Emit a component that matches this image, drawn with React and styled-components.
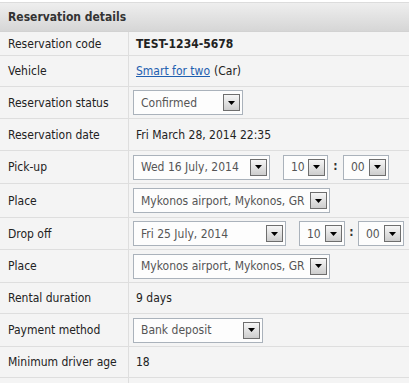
import React from 'react';
import styled, { createGlobalStyle } from 'styled-components';

const GlobalStyle = createGlobalStyle`
  html, body {
    margin: 0;
    padding: 0;
    background: #fff;
    overflow: hidden;
  }
  body {
    font-family: "DejaVu Sans Condensed", "DejaVu Sans", "Liberation Sans", sans-serif;
    font-size: 12px;
    color: #222;
  }
`;

const Panel = styled.div`
  width: 409px;
  padding-top: 2px;
`;

const Header = styled.div`
  height: 28px;
  border-top: 1px solid #dcdcdc;
  border-bottom: 1px solid #d2d2d2;
  background: linear-gradient(#eeeeee, #d6d6d6);
  display: flex;
  align-items: center;
  padding-left: 8px;
  font-weight: bold;
  font-size: 12px;
  color: #333;
`;

const Row = styled.div`
  display: grid;
  grid-template-columns: 129px 1fr;
  height: ${p => p.h}px;
  border-bottom: 1px solid #dedede;
  background: #f4f4f4;
  box-sizing: border-box;
`;

const Label = styled.div`
  display: flex;
  align-items: center;
  padding-left: 8px;
  border-right: 1px solid #dedede;
  color: #222;
`;

const Value = styled.div`
  display: flex;
  align-items: center;
  padding-left: ${p => (p.$control ? 4 : 7)}px;
  color: #222;
  font-weight: ${p => (p.$bold ? 'bold' : 'normal')};
`;

const Link = styled.a`
  color: #1f5fb0;
  text-decoration: underline;
  margin-right: 4px;
`;

const SelectBox = styled.div`
  width: ${p => p.w}px;
  height: 25px;
  box-sizing: border-box;
  border: 1px solid #aab2bb;
  background: #fdfdfd;
  display: flex;
  align-items: center;
  justify-content: space-between;
  padding: 0 2px 0 7px;
  margin-left: ${p => p.ml || 0}px;
  color: #555;
  white-space: nowrap;
  overflow: hidden;
`;

const ArrowButton = styled.span`
  flex: none;
  width: 15px;
  height: 15px;
  border: 1px solid #6e6e6e;
  background: linear-gradient(#f6f6f6, #cdcdcd);
  display: flex;
  align-items: center;
  justify-content: center;
  margin-left: 3px;
`;

const Colon = styled.span`
  font-weight: bold;
  color: #333;
  width: ${p => p.w}px;
  text-align: center;
  margin-top: -3px;
`;

const Arrow = () => (
  <ArrowButton>
    <svg width="7" height="4" viewBox="0 0 7 4">
      <path d="M0 0H7L3.5 4Z" fill="#000" />
    </svg>
  </ArrowButton>
);

const Select = ({ w, ml, children }) => (
  <SelectBox w={w} ml={ml}>
    <span>{children}</span>
    <Arrow />
  </SelectBox>
);

export default function App() {
  return (
    <>
      <GlobalStyle />
      <Panel>
        <Header>Reservation details</Header>
        <Row h={24}>
          <Label>Reservation code</Label>
          <Value $bold>TEST-1234-5678</Value>
        </Row>
        <Row h={31}>
          <Label>Vehicle</Label>
          <Value><Link href="#">Smart for two</Link>(Car)</Value>
        </Row>
        <Row h={32}>
          <Label>Reservation status</Label>
          <Value $control><Select w={110}>Confirmed</Select></Value>
        </Row>
        <Row h={32}>
          <Label>Reservation date</Label>
          <Value>Fri March 28, 2014 22:35</Value>
        </Row>
        <Row h={33}>
          <Label>Pick-up</Label>
          <Value $control>
            <Select w={137}>Wed 16 July, 2014</Select>
            <Select w={45} ml={13}>10</Select>
            <Colon w={15}>:</Colon>
            <Select w={46}>00</Select>
          </Value>
        </Row>
        <Row h={34}>
          <Label>Place</Label>
          <Value $control><Select w={197}>Mykonos airport, Mykonos, GR</Select></Value>
        </Row>
        <Row h={32}>
          <Label>Drop off</Label>
          <Value $control>
            <Select w={153}>Fri 25 July, 2014</Select>
            <Select w={46} ml={13}>10</Select>
            <Colon w={13}>:</Colon>
            <Select w={46}>00</Select>
          </Value>
        </Row>
        <Row h={33}>
          <Label>Place</Label>
          <Value $control><Select w={197}>Mykonos airport, Mykonos, GR</Select></Value>
        </Row>
        <Row h={31}>
          <Label>Rental duration</Label>
          <Value>9 days</Value>
        </Row>
        <Row h={33}>
          <Label>Payment method</Label>
          <Value $control><Select w={130}>Bank deposit</Select></Value>
        </Row>
        <Row h={31}>
          <Label>Minimum driver age</Label>
          <Value>18</Value>
        </Row>
        <Row h={32}>
          <Label />
          <Value />
        </Row>
      </Panel>
    </>
  );
}
